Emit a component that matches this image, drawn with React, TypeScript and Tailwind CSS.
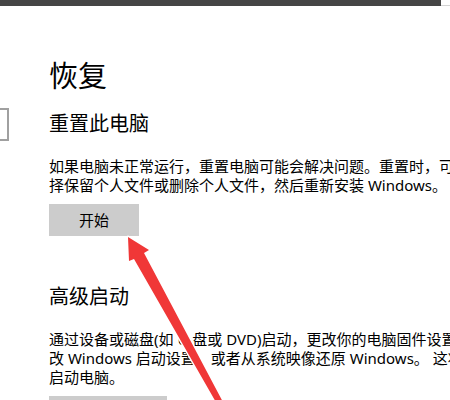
import React from "react"

const FONT = { fontFamily: '"Noto Sans", "Noto Sans CJK SC", sans-serif' }

function Arrow() {
  // red annotation arrow drawn over the page, with a thin white halo
  return (
    <svg
      className="absolute left-0 top-0 pointer-events-none"
      width={450}
      height={400}
      viewBox="0 0 450 400"
    >
      <polygon
        points="128,237 149,250 144,253 224,404 217,404 134,259 129,261"
        fill="#f03737"
        stroke="#ffffff"
        strokeWidth={3}
        strokeLinejoin="round"
        paintOrder="stroke"
      />
    </svg>
  )
}

export default function App() {
  return (
    <div className="relative w-[450px] h-[400px] overflow-hidden bg-white text-black" style={FONT}>
      <div className="flex h-[6px]">
        <div className="w-[441px] bg-[#454545]" />
        <div className="flex-1 border-b border-[#d4d4d4]" />
      </div>

      <div className="flex">
        <div className="w-[9px] shrink-0">
          <div className="mt-[102px] h-[33px] w-[9px] border-2 border-l-0 border-[#a0a0a0]" />
        </div>

        <div className="pl-[40px] whitespace-nowrap">
          <h1 className="mt-[52px] text-[29px] leading-[36px] font-normal">恢复</h1>

          <h2 className="mt-[16px] text-[20px] leading-[28px] font-normal">重置此电脑</h2>

          <p className="mt-[19px] text-[15px] leading-[19px]">
            <span className="block">如果电脑未正常运行，重置电脑可能会解决问题。重置时，可以选</span>
            <span className="block">择保留个人文件或删除个人文件，然后重新安装 Windows。</span>
          </p>

          <button className="mt-[9px] h-[32px] w-[90px] bg-[#cccccc] text-[15px] leading-[32px]">
            开始
          </button>

          <h2 className="mt-[47px] text-[20px] leading-[28px] font-normal">高级启动</h2>

          <p className="mt-[19px] text-[15px] leading-[19px]">
            <span className="block">通过设备或磁盘(如 U 盘或 DVD)启动，更改你的电脑固件设置，更</span>
            <span className="block">改 Windows 启动设置，或者从系统映像还原 Windows。 这将重新</span>
            <span className="block">启动电脑。</span>
          </p>

          <button className="mt-[9px] h-[32px] w-[118px] bg-[#cccccc] text-[15px] leading-[32px]">
            立即重新启动
          </button>
        </div>
      </div>

      <Arrow />
    </div>
  )
}
